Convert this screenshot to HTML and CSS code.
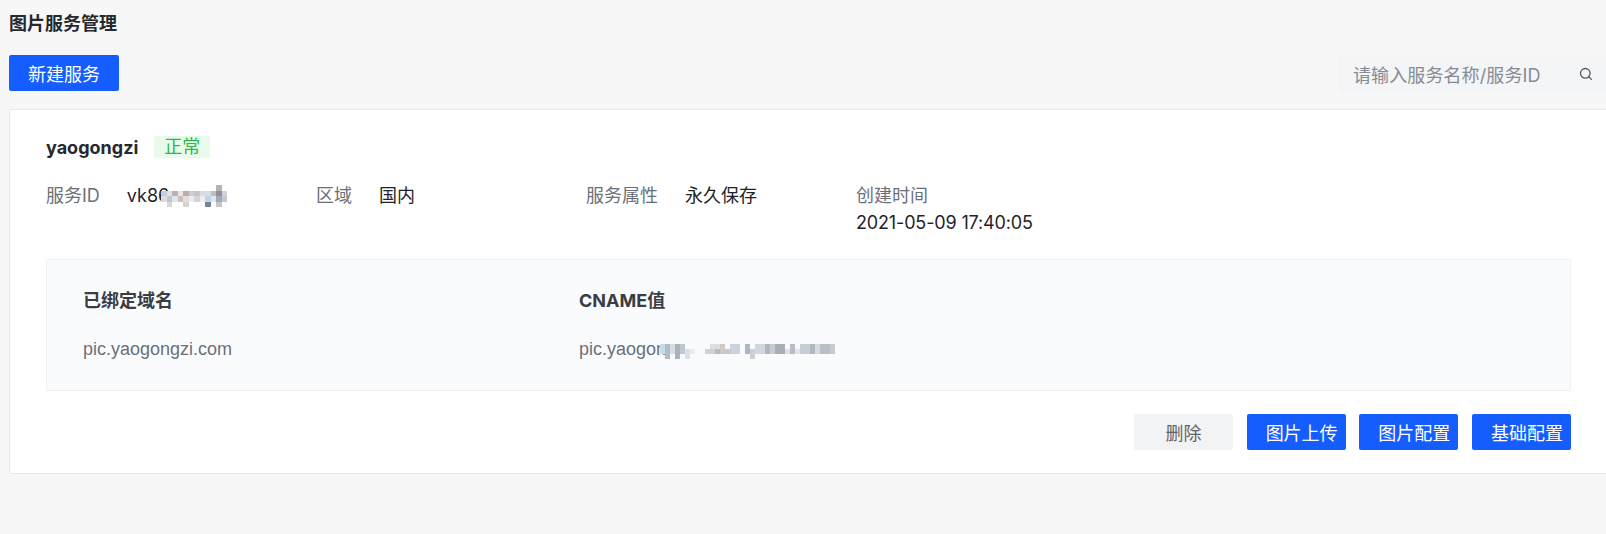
FILE: index.html
```html
<!DOCTYPE html>
<html>

<head>
    <meta charset="utf-8">
    <title>图片服务管理</title>
    <link rel="stylesheet" href="styles.css">
</head>

<body>
    <div class="main">
        <h1 class="title">图片服务管理</h1>

        <div class="toolbar">
            <button class="btn btn-blue btn-new">新建服务</button>
            <div class="search">
                <span class="search-text">请输入服务名称/服务ID</span>
                <svg class="search-icon" width="14" height="14" viewBox="0 0 14 14">
                    <circle cx="6.3" cy="6.3" r="4.8" fill="none" stroke="#555b66" stroke-width="1.3"/>
                    <path d="M9.8 9.8 L12.4 12.4" stroke="#555b66" stroke-width="1.3" stroke-linecap="round"/>
                </svg>
            </div>
        </div>

        <div class="card">
            <div class="name-row">
                <span class="name">yaogongzi</span>
                <span class="tag">正常</span>
            </div>

            <div class="info">
                <div class="info-item">
                    <span class="label">服务ID</span>
                    <span class="value masked">vk86
                        <svg class="mosaic mosaic-id" width="66" height="22" viewBox="0 0 12 4" shape-rendering="crispEdges">
                            <rect x="10" y="0" width="1" height="1" fill="#b5b3ba"/>
                            <rect x="0" y="1" width="1" height="1" fill="#c9ccd2"/>
                            <rect x="1" y="1" width="1" height="1" fill="#dfe3e8"/>
                            <rect x="2" y="1" width="1" height="1" fill="#b6b3b8"/>
                            <rect x="3" y="1" width="1" height="1" fill="#e8e4e2"/>
                            <rect x="4" y="1" width="1" height="1" fill="#bdaea9"/>
                            <rect x="5" y="1" width="1" height="1" fill="#cfcdd0"/>
                            <rect x="6" y="1" width="1" height="1" fill="#c6c6ca"/>
                            <rect x="7" y="1" width="1" height="1" fill="#dcdce0"/>
                            <rect x="8" y="1" width="1" height="1" fill="#d6dde3"/>
                            <rect x="9" y="1" width="1" height="1" fill="#b9bdc5"/>
                            <rect x="10" y="1" width="1" height="1" fill="#8f9099"/>
                            <rect x="11" y="1" width="1" height="1" fill="#d0d2d8"/>
                            <rect x="0" y="2" width="1" height="1" fill="#dcdee2"/>
                            <rect x="1" y="2" width="1" height="1" fill="#c4c6cc"/>
                            <rect x="2" y="2" width="1" height="1" fill="#e4e4e6"/>
                            <rect x="3" y="2" width="1" height="1" fill="#cdc0bc"/>
                            <rect x="4" y="2" width="1" height="1" fill="#e5dedb"/>
                            <rect x="5" y="2" width="1" height="1" fill="#ececee"/>
                            <rect x="6" y="2" width="1" height="1" fill="#d4d4d8"/>
                            <rect x="7" y="2" width="1" height="1" fill="#eeeef0"/>
                            <rect x="8" y="2" width="1" height="1" fill="#bcd6e8"/>
                            <rect x="9" y="2" width="1" height="1" fill="#dfe6ec"/>
                            <rect x="10" y="2" width="1" height="1" fill="#a5a9b3"/>
                            <rect x="11" y="2" width="1" height="1" fill="#c5c8d0"/>
                            <rect x="1" y="3" width="1" height="1" fill="#d8d9dd"/>
                            <rect x="4" y="3" width="1" height="1" fill="#d9d0cc"/>
                            <rect x="8" y="3" width="1" height="1" fill="#6f8796"/>
                            <rect x="10" y="3" width="1" height="1" fill="#c4c6cc"/>
                        </svg>
                    </span>
                </div>
                <div class="info-item">
                    <span class="label">区域</span>
                    <span class="value">国内</span>
                </div>
                <div class="info-item">
                    <span class="label">服务属性</span>
                    <span class="value">永久保存</span>
                </div>
                <div class="info-item info-stack">
                    <span class="label">创建时间</span>
                    <span class="value date">2021-05-09 17:40:05</span>
                </div>
            </div>

            <div class="domain-box">
                <div class="domain-col">
                    <div class="domain-head">已绑定域名</div>
                    <div class="domain-val">pic.yaogongzi.com</div>
                </div>
                <div class="domain-col">
                    <div class="domain-head">CNAME值</div>
                    <div class="domain-val masked">pic.yaogon
                        <svg class="mosaic mosaic-cname" width="175" height="15" viewBox="0 0 35 3" shape-rendering="crispEdges">
                            <rect x="0" y="0" width="1" height="2" fill="#cbdbe6"/>
                            <rect x="1" y="0" width="1" height="3" fill="#b4bcc6"/>
                            <rect x="2" y="0" width="1" height="2" fill="#d5dce2"/>
                            <rect x="3" y="0" width="1" height="3" fill="#aab2bc"/>
                            <rect x="4" y="0" width="1" height="2" fill="#c2c8d0"/>
                            <rect x="5" y="1" width="1" height="2" fill="#dbe2e8"/>
                            <rect x="6" y="1" width="1" height="1" fill="#e8ecf0"/>
                            <rect x="9" y="1" width="2" height="1" fill="#cfd2d8"/>
                            <rect x="10" y="0" width="2" height="1" fill="#dcdee2"/>
                            <rect x="11" y="1" width="1" height="1" fill="#b8bcc4"/>
                            <rect x="12" y="0" width="1" height="2" fill="#d2c8c6"/>
                            <rect x="13" y="1" width="1" height="1" fill="#c4c8d0"/>
                            <rect x="14" y="0" width="2" height="2" fill="#cdd2da"/>
                            <rect x="17" y="0" width="1" height="2" fill="#aeb6c4"/>
                            <rect x="18" y="1" width="1" height="2" fill="#c8d0da"/>
                            <rect x="19" y="0" width="2" height="2" fill="#d2d6de"/>
                            <rect x="21" y="0" width="1" height="2" fill="#b0b6c0"/>
                            <rect x="22" y="0" width="1" height="2" fill="#c8cbd2"/>
                            <rect x="23" y="0" width="2" height="2" fill="#a9aeb8"/>
                            <rect x="25" y="1" width="1" height="1" fill="#dcdfe4"/>
                            <rect x="26" y="0" width="1" height="2" fill="#b7bcc6"/>
                            <rect x="27" y="1" width="1" height="1" fill="#e2e4e8"/>
                            <rect x="28" y="0" width="2" height="2" fill="#c8ccd4"/>
                            <rect x="30" y="0" width="1" height="2" fill="#b2b8c2"/>
                            <rect x="31" y="0" width="1" height="2" fill="#d6d9de"/>
                            <rect x="32" y="0" width="2" height="2" fill="#b9bec8"/>
                            <rect x="34" y="0" width="1" height="2" fill="#c6cad2"/>
                        </svg>
                    </div>
                </div>
            </div>

            <div class="actions">
                <button class="btn btn-gray">删除</button>
                <button class="btn btn-blue">图片上传</button>
                <button class="btn btn-blue">图片配置</button>
                <button class="btn btn-blue">基础配置</button>
            </div>
        </div>
    </div>
</body>

</html>
```
FILE: styles.css
```css
html, body {
  margin: 0;
  height: 100%;
  overflow: hidden;
}

body {
  background-color: #f7f7f8;
  color: #1f2329;
  font-family: Inter, "Noto Sans CJK SC", sans-serif;
  font-size: 18px;
}

.main {
  padding: 12px 0 0 9px;
}

.title {
  margin: 0;
  font-size: 18px;
  line-height: 24px;
  font-weight: bold;
  color: #25282e;
}

.toolbar {
  display: flex;
  justify-content: space-between;
  align-items: center;
  margin-top: 16px;
  height: 42px;
}

.btn {
  height: 36px;
  width: 99px;
  border: none;
  border-radius: 2px;
  font-family: inherit;
  font-size: 18px;
  cursor: pointer;
  padding: 0;
}

.btn-blue {
  background-color: #165dff;
  color: #fff;
  text-align: left;
  padding-left: 19px;
}

.btn-new {
  width: 110px;
}

.btn-gray {
  background-color: #f2f3f5;
  color: #5f6368;
}

.search {
  display: flex;
  align-items: center;
  justify-content: space-between;
  width: 268px;
  height: 38px;
  margin-top: 2px;
  background-color: #f3f5f6;
  border-radius: 2px;
  padding: 0 13px 0 15px;
  box-sizing: border-box;
}

.search-text {
  color: #868b94;
  letter-spacing: 0.1px;
}

.card {
  margin-top: 15px;
  background-color: #fff;
  border: 1px solid #e6e8eb;
  border-right: none;
  border-radius: 2px 0 0 2px;
  padding: 25px 35px 0 36px;
  height: 365px;
  box-sizing: border-box;
}

.name-row {
  display: flex;
  align-items: center;
  height: 24px;
}

.name {
  font-weight: bold;
  color: #25282e;
}

.tag {
  margin-left: 16px;
  width: 56px;
  height: 22px;
  line-height: 22px;
  text-align: center;
  background-color: #e8fbea;
  color: #2cb84e;
  border-radius: 2px;
}

.info {
  display: flex;
  margin-top: 23px;
  height: 77px;
}

.info-item {
  display: flex;
  column-gap: 27px;
  width: 270px;
  line-height: 27px;
}

.info-stack {
  flex-direction: column;
}

.date {
  letter-spacing: -0.15px;
}

.label {
  color: #6b7078;
}

.masked {
  position: relative;
}

.mosaic {
  position: absolute;
  filter: blur(0.5px);
}

.mosaic-id {
  left: 34px;
  top: 3px;
}

.mosaic-cname {
  left: 81px;
  top: 7px;
}

.domain-box {
  display: flex;
  height: 132px;
  box-sizing: border-box;
  padding: 29px 36px;
  background-color: #fafbfd;
  border: 1px solid #eef0f3;
  border-radius: 2px;
}

.domain-col {
  width: 496px;
}

.domain-head {
  font-weight: bold;
  color: #3a3d44;
  line-height: 24px;
}

.domain-val {
  display: inline-block;
  margin-top: 24px;
  line-height: 24px;
  color: #6b7078;
  font-family: "Liberation Sans", "Noto Sans CJK SC", sans-serif;
}

.actions {
  display: flex;
  justify-content: flex-end;
  gap: 13.7px;
  margin-top: 23px;
}
```
